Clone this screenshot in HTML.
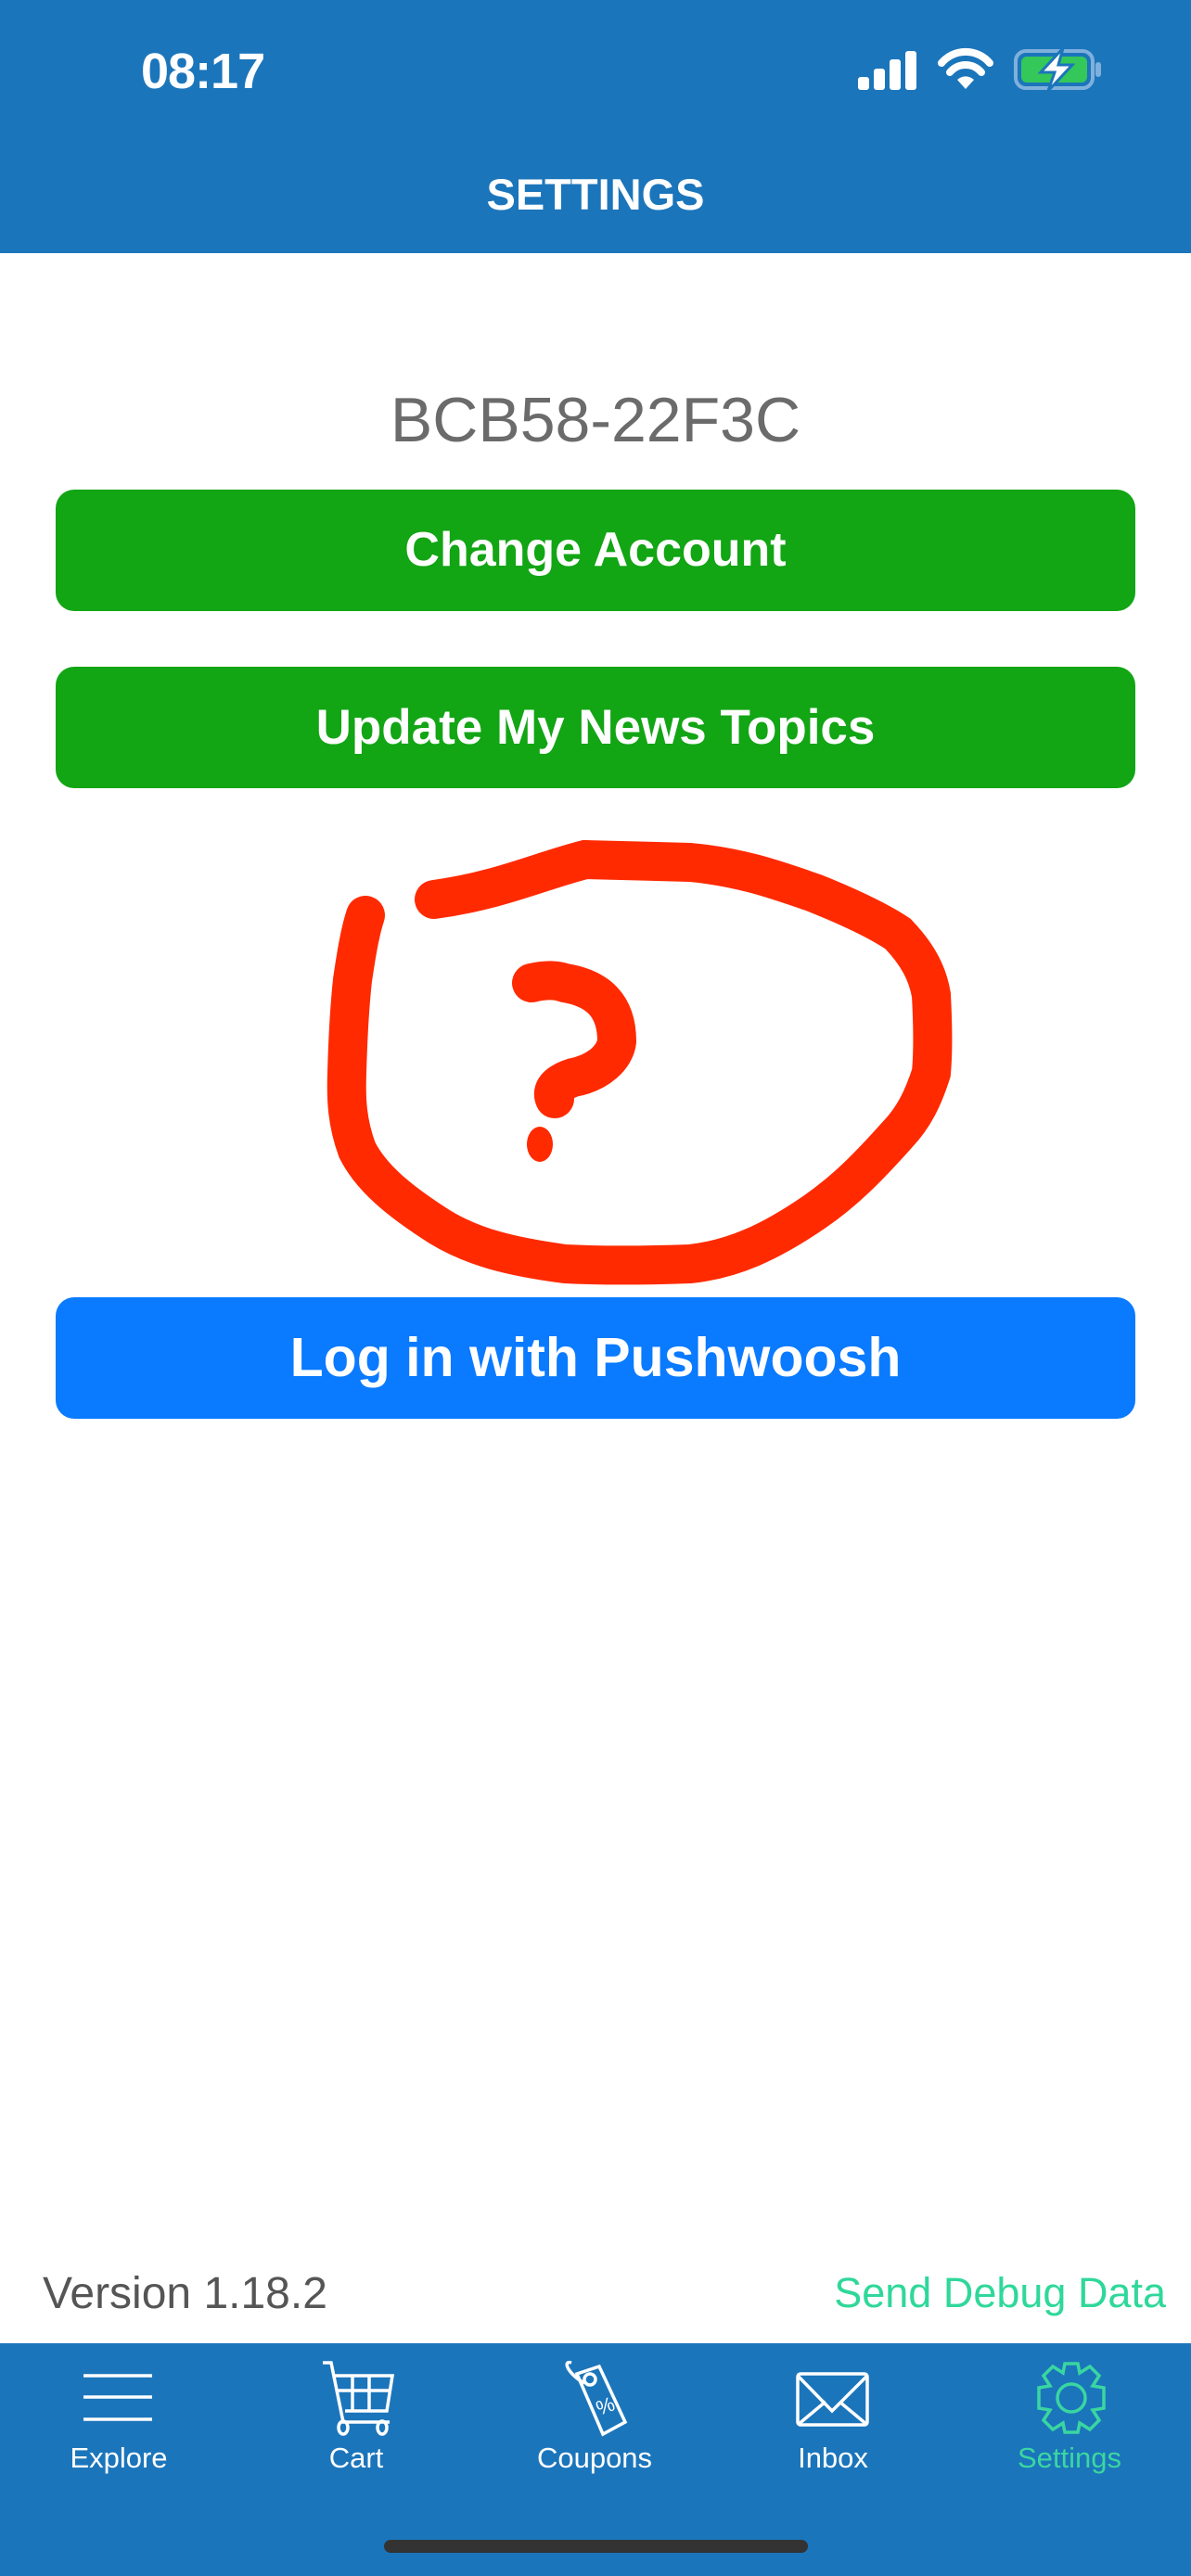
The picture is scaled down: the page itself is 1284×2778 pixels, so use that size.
<!DOCTYPE html>
<html><head><meta charset="utf-8"><style>
*{margin:0;padding:0;box-sizing:border-box}
body{width:1284px;height:2778px;background:#fff;position:relative;overflow:hidden;font-family:"Liberation Sans",Arial,sans-serif}
.hdr{position:absolute;left:0;top:0;width:1284px;height:273px;background:#1b75bb}
.abs{position:absolute}
.btn{position:absolute;left:60px;width:1164px;border-radius:20px;color:#fff;font-weight:bold;text-align:center}
.tab{position:absolute;top:2527px;left:0;width:1284px;height:251px;background:#1b75bb}
.lbl{position:absolute;top:2633px;width:200px;text-align:center;font-size:31px;color:#fff}
</style></head><body>
<div class="hdr"></div>
<div class="abs" style="left:152px;top:46px;font-size:54px;font-weight:bold;color:#fff;letter-spacing:-1px">08:17</div>
<svg class="abs" style="left:920px;top:50px" width="280" height="52" viewBox="920 50 280 52">
<rect x="925" y="83" width="12" height="14" rx="3" fill="#fff"/>
<rect x="942" y="74" width="12" height="23" rx="3" fill="#fff"/>
<rect x="959" y="64" width="12" height="33" rx="3" fill="#fff"/>
<rect x="976" y="55" width="12" height="42" rx="3" fill="#fff"/>
<path d="M1015 68 A34 34 0 0 1 1067 68" stroke="#fff" stroke-width="8" fill="none" stroke-linecap="round"/>
<path d="M1024 78 A22 22 0 0 1 1058 78" stroke="#fff" stroke-width="8" fill="none" stroke-linecap="round"/>
<path d="M1041 96 L1032 86 A13 13 0 0 1 1050 86 Z" fill="#fff"/>
<rect x="1095" y="55" width="83" height="40" rx="11" fill="none" stroke="#7fb0dc" stroke-width="4"/>
<rect x="1101" y="61" width="71" height="28" rx="6" fill="#34c759"/>
<rect x="1181" y="67" width="6" height="16" rx="3" fill="#7fb0dc"/>
<path d="M1146 52 L1122 78 L1137 78 L1130 98 L1156 70 L1141 70 Z" fill="#fff" stroke="#1b75bb" stroke-width="3"/>
</svg>
<div class="abs" style="left:0;top:182px;width:1284px;text-align:center;font-size:47px;font-weight:bold;color:#fff">SETTINGS</div>

<div class="abs" style="left:0;top:414px;width:1284px;text-align:center;font-size:68px;color:#6b6b6b">BCB58-22F3C</div>
<div class="btn" style="top:528px;height:131px;line-height:131px;background:#12a514;font-size:52px">Change Account</div>
<div class="btn" style="top:719px;height:131px;line-height:131px;background:#12a514;font-size:53px">Update My News Topics</div>

<svg class="abs" style="left:0;top:0" width="1284" height="1500">
<path d="M468 970 C540 960 580 940 631 927 C680 928 700 929 744 930 C800 935 840 950 878 963 C920 980 950 995 968 1007 C990 1030 1000 1050 1004 1073 C1006 1110 1006 1135 1004 1157 C995 1185 985 1205 968 1223 C935 1260 910 1285 878 1307 C830 1340 790 1358 744 1363 C690 1365 650 1365 609 1363 C550 1355 510 1345 474 1323 C430 1295 400 1270 385 1240 C374 1210 373 1185 374 1157 C375 1120 377 1085 380 1057 C384 1030 388 1005 394 987" fill="none" stroke="#ff2a00" stroke-width="42" stroke-linecap="round"/>
<path d="M573 1060 C590 1056 600 1057 609 1060 C645 1066 665 1085 665 1123 C663 1140 645 1157 618 1162 C600 1168 594 1176 598 1185" fill="none" stroke="#ff2a00" stroke-width="42" stroke-linecap="round"/>
<ellipse cx="582" cy="1234" rx="14" ry="19" fill="#ff2a00"/>
</svg>

<div class="btn" style="top:1399px;height:131px;line-height:131px;background:#0a7aff;font-size:59px">Log in with Pushwoosh</div>

<div class="abs" style="left:46px;top:2446px;font-size:48px;color:#555">Version 1.18.2</div>
<div class="abs" style="right:27px;top:2447px;font-size:45px;color:#2fd89a">Send Debug Data</div>

<div class="tab"></div>
<svg class="abs" style="left:0;top:2527px" width="1284" height="251" viewBox="0 2527 1284 251" fill="none" stroke="#fff" stroke-width="3.5">
<path d="M90 2562H164M90 2585H164M90 2609H164"/>
<path d="M348 2548H357L370 2612H420M360 2562H423L417 2600H372M380 2562V2600M398 2562V2600M364 2578H420"/>
<ellipse cx="370" cy="2618" rx="5" ry="7"/><ellipse cx="412" cy="2618" rx="5" ry="7"/>
<path d="M622 2560 L646 2552 L674 2612 L650 2625 Z"/><circle cx="636" cy="2566" r="6"/>
<path d="M630 2570 C612 2560 606 2545 616 2548"/>
<text x="646" y="2605" fill="#fff" stroke="none" font-size="22" transform="rotate(-20 646 2605)">%</text>
<rect x="860" y="2560" width="75" height="55" rx="3"/><path d="M860 2562L897 2600L935 2562M860 2615L890 2590M935 2615L905 2590"/>
<g stroke="#3ad6a0"><circle cx="1155" cy="2586" r="15"/>
<path d="M1148 2549 L1162 2549 L1164 2559 L1175 2552 L1185 2562 L1178 2573 L1190 2575 L1190 2597 L1178 2599 L1185 2610 L1175 2620 L1164 2613 L1162 2623 L1148 2623 L1146 2613 L1135 2620 L1125 2610 L1132 2599 L1120 2597 L1120 2575 L1132 2573 L1125 2562 L1135 2552 L1146 2559 Z"/></g>
</svg>
<div class="lbl" style="left:28px">Explore</div>
<div class="lbl" style="left:284px">Cart</div>
<div class="lbl" style="left:541px">Coupons</div>
<div class="lbl" style="left:798px">Inbox</div>
<div class="lbl" style="left:1053px;color:#3ad6a0">Settings</div>
<div class="abs" style="left:414px;top:2739px;width:457px;height:14px;border-radius:7px;background:#333"></div>
</body></html>
